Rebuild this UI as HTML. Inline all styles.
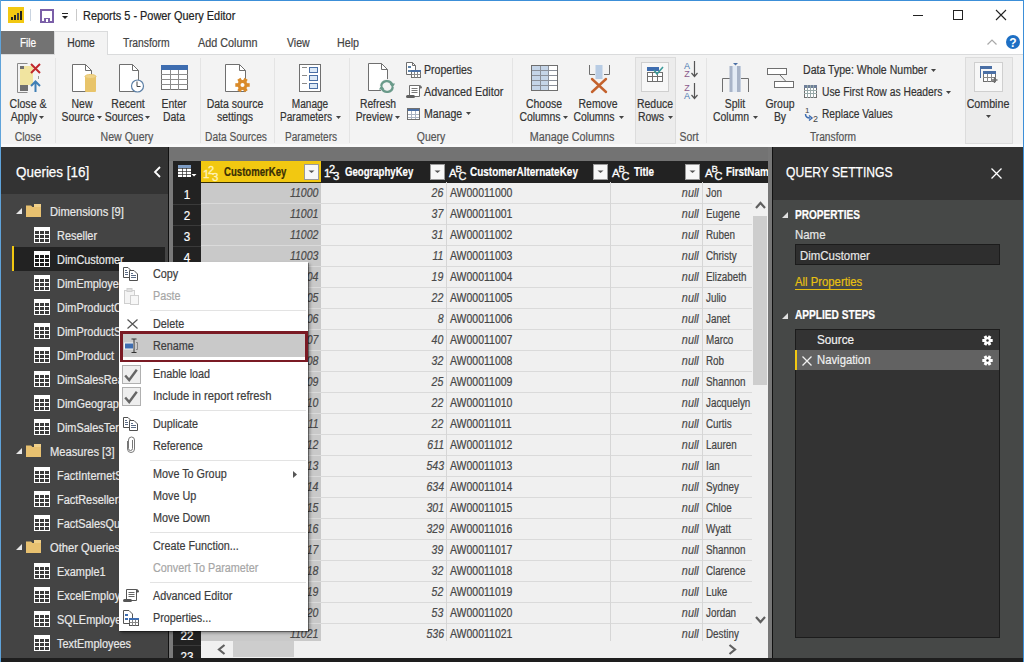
<!DOCTYPE html>
<html><head><meta charset="utf-8"><title>Power Query Editor</title>
<style>
html,body{margin:0;padding:0;}
body{width:1024px;height:662px;overflow:hidden;position:relative;background:#fff;font-family:"Liberation Sans",sans-serif;}
.a{position:absolute;display:block;}
.t{position:absolute;white-space:pre;display:inline-block;-webkit-text-stroke-width:0.2px;}
svg.a{overflow:visible;}
</style></head><body>

<div class="a" style="left:0px;top:0px;width:1024px;height:31px;background:#ffffff;"></div>
<div class="a" style="left:0px;top:31px;width:1024px;height:23px;background:#ffffff;"></div>
<div class="a" style="left:0px;top:54px;width:1024px;height:93px;background:#f3f3f3;"></div>
<div class="a" style="left:0px;top:54px;width:1024px;height:1px;background:#dadbdc;"></div>
<div class="a" style="left:0px;top:147px;width:169px;height:511px;background:#444444;"></div>
<div class="a" style="left:0px;top:147px;width:168px;height:47px;background:#333333;"></div>
<div class="a" style="left:168px;top:147px;width:1px;height:511px;background:#111;"></div>
<div class="a" style="left:169px;top:147px;width:603px;height:511px;background:#737373;"></div>
<div class="a" style="left:169px;top:161px;width:4px;height:497px;background:#7a7a7a;"></div>
<div class="a" style="left:0px;top:144px;width:1024px;height:3px;background:#f9f9f9;"></div>
<div class="a" style="left:772px;top:147px;width:1px;height:511px;background:#111;"></div>
<div class="a" style="left:773px;top:147px;width:251px;height:511px;background:#464847;"></div>
<div class="a" style="left:773px;top:147px;width:251px;height:53px;background:#333333;"></div>
<div class="a" style="left:0px;top:658px;width:1024px;height:4px;background:#1e1e1e;"></div>
<span class="t" style="top:9.84px;font-size:12px;line-height:12px;color:#222;left:83px;transform-origin:0 0;transform:scaleX(0.91);">Reports 5 - Power Query Editor</span>
<div class="a" style="left:1px;top:31px;width:53px;height:23px;background:#737373;"></div>
<span class="t" style="top:36.64px;font-size:12px;line-height:12px;color:#fff;left:27.5px;transform-origin:0 0;transform:scaleX(0.84) translateX(-50%);">File</span>
<div class="a" style="left:54px;top:31px;width:54px;height:24px;background:#f3f3f3;border:1px solid #dadbdc;border-bottom:none;box-sizing:border-box;"></div>
<span class="t" style="top:36.64px;font-size:12px;line-height:12px;color:#333;left:81px;transform-origin:0 0;transform:scaleX(0.86) translateX(-50%);">Home</span>
<span class="t" style="top:36.64px;font-size:12px;line-height:12px;color:#444;left:122.6px;transform-origin:0 0;transform:scaleX(0.86);">Transform</span>
<span class="t" style="top:36.64px;font-size:12px;line-height:12px;color:#444;left:198.4px;transform-origin:0 0;transform:scaleX(0.9);">Add Column</span>
<span class="t" style="top:36.64px;font-size:12px;line-height:12px;color:#444;left:287px;transform-origin:0 0;transform:scaleX(0.88);">View</span>
<span class="t" style="top:36.64px;font-size:12px;line-height:12px;color:#444;left:337px;transform-origin:0 0;transform:scaleX(0.89);">Help</span>
<svg class="a" style="left:8px;top:7px;" width="16" height="16" viewBox="0 0 16 16"><rect x="0" y="0" width="16" height="16" fill="#f2c811"/><rect x="3" y="10" width="2" height="3" fill="#222"/><rect x="6" y="8" width="2" height="5" fill="#222"/><rect x="9" y="6" width="2" height="7" fill="#444"/><rect x="12" y="4" width="2" height="9" fill="#222"/></svg>
<div class="a" style="left:30px;top:9px;width:1px;height:12px;background:#c9d3e0;"></div>
<svg class="a" style="left:40px;top:9px;" width="14" height="14" viewBox="0 0 14 14"><rect x="1" y="1" width="12" height="12" fill="none" stroke="#7b5fa8" stroke-width="2"/><rect x="3.5" y="2" width="7" height="5" fill="#fff"/><rect x="4" y="9" width="6" height="4" fill="#7b5fa8"/><rect x="6" y="10" width="2" height="3" fill="#fff"/></svg>
<svg class="a" style="left:62px;top:13px;" width="6" height="8" viewBox="0 0 6 8"><rect x="0" y="0" width="6" height="1" fill="#222"/><path d="M0 3 L6 3 L3 6 Z" fill="#222"/></svg>
<div class="a" style="left:76px;top:9px;width:1px;height:12px;background:#c9c9c9;"></div>
<div class="a" style="left:913px;top:15px;width:10px;height:1px;background:#222;"></div>
<svg class="a" style="left:953px;top:10px;" width="10" height="10" viewBox="0 0 10 10"><rect x="0.5" y="0.5" width="9" height="9" fill="none" stroke="#222" stroke-width="1"/></svg>
<svg class="a" style="left:996px;top:10px;" width="10" height="10" viewBox="0 0 10 10"><path d="M0 0 L10 10 M10 0 L0 10" stroke="#222" stroke-width="1.1"/></svg>
<svg class="a" style="left:987px;top:39px;" width="10" height="6" viewBox="0 0 10 6"><path d="M0.5 5.5 L5 1 L9.5 5.5" fill="none" stroke="#a8a8a8" stroke-width="1.2"/></svg>
<svg class="a" style="left:1006px;top:35px;" width="14" height="14" viewBox="0 0 14 14"><circle cx="7" cy="7" r="7" fill="#1e6fc4"/><text x="7" y="11.5" text-anchor="middle" font-family="Liberation Sans" font-weight="bold" font-size="12" fill="#fff">?</text></svg>
<span class="t" style="top:97.84px;font-size:12px;line-height:12px;color:#333;left:27.5px;transform-origin:0 0;transform:scaleX(0.88) translateX(-50%);">Close &amp;</span>
<span class="t" style="top:110.84px;font-size:12px;line-height:12px;color:#333;left:23.5px;transform-origin:0 0;transform:scaleX(0.88) translateX(-50%);">Apply</span>
<svg class="a" style="left:39px;top:116px;" width="5" height="3" viewBox="0 0 5 3"><path d="M0 0 L5 0 L2.5 3 Z" fill="#444"/></svg>
<span class="t" style="top:130.84px;font-size:12px;line-height:12px;color:#555;left:27.5px;transform-origin:0 0;transform:scaleX(0.87) translateX(-50%);">Close</span>
<div class="a" style="left:55px;top:58px;width:1px;height:85px;background:#e4e4e4;"></div>
<span class="t" style="top:97.84px;font-size:12px;line-height:12px;color:#333;left:82px;transform-origin:0 0;transform:scaleX(0.87) translateX(-50%);">New</span>
<span class="t" style="top:110.84px;font-size:12px;line-height:12px;color:#333;left:78px;transform-origin:0 0;transform:scaleX(0.87) translateX(-50%);">Source</span>
<svg class="a" style="left:97px;top:116px;" width="5" height="3" viewBox="0 0 5 3"><path d="M0 0 L5 0 L2.5 3 Z" fill="#444"/></svg>
<span class="t" style="top:97.84px;font-size:12px;line-height:12px;color:#333;left:128px;transform-origin:0 0;transform:scaleX(0.88) translateX(-50%);">Recent</span>
<span class="t" style="top:110.84px;font-size:12px;line-height:12px;color:#333;left:124px;transform-origin:0 0;transform:scaleX(0.88) translateX(-50%);">Sources</span>
<svg class="a" style="left:145px;top:116px;" width="5" height="3" viewBox="0 0 5 3"><path d="M0 0 L5 0 L2.5 3 Z" fill="#444"/></svg>
<span class="t" style="top:97.84px;font-size:12px;line-height:12px;color:#333;left:174px;transform-origin:0 0;transform:scaleX(0.87) translateX(-50%);">Enter</span>
<span class="t" style="top:110.84px;font-size:12px;line-height:12px;color:#333;left:174px;transform-origin:0 0;transform:scaleX(0.87) translateX(-50%);">Data</span>
<span class="t" style="top:130.84px;font-size:12px;line-height:12px;color:#555;left:126.7px;transform-origin:0 0;transform:scaleX(0.88) translateX(-50%);">New Query</span>
<div class="a" style="left:200px;top:58px;width:1px;height:85px;background:#e4e4e4;"></div>
<span class="t" style="top:97.84px;font-size:12px;line-height:12px;color:#333;left:235.3px;transform-origin:0 0;transform:scaleX(0.875) translateX(-50%);">Data source</span>
<span class="t" style="top:110.84px;font-size:12px;line-height:12px;color:#333;left:235.3px;transform-origin:0 0;transform:scaleX(0.875) translateX(-50%);">settings</span>
<span class="t" style="top:130.84px;font-size:12px;line-height:12px;color:#555;left:236.4px;transform-origin:0 0;transform:scaleX(0.85) translateX(-50%);">Data Sources</span>
<div class="a" style="left:274px;top:58px;width:1px;height:85px;background:#e4e4e4;"></div>
<span class="t" style="top:97.84px;font-size:12px;line-height:12px;color:#333;left:310px;transform-origin:0 0;transform:scaleX(0.84) translateX(-50%);">Manage</span>
<span class="t" style="top:110.84px;font-size:12px;line-height:12px;color:#333;left:306px;transform-origin:0 0;transform:scaleX(0.84) translateX(-50%);">Parameters</span>
<svg class="a" style="left:336px;top:116px;" width="5" height="3" viewBox="0 0 5 3"><path d="M0 0 L5 0 L2.5 3 Z" fill="#444"/></svg>
<span class="t" style="top:130.84px;font-size:12px;line-height:12px;color:#555;left:310.5px;transform-origin:0 0;transform:scaleX(0.84) translateX(-50%);">Parameters</span>
<div class="a" style="left:349px;top:58px;width:1px;height:85px;background:#e4e4e4;"></div>
<span class="t" style="top:97.84px;font-size:12px;line-height:12px;color:#333;left:378px;transform-origin:0 0;transform:scaleX(0.86) translateX(-50%);">Refresh</span>
<span class="t" style="top:110.84px;font-size:12px;line-height:12px;color:#333;left:374px;transform-origin:0 0;transform:scaleX(0.86) translateX(-50%);">Preview</span>
<svg class="a" style="left:395px;top:116px;" width="5" height="3" viewBox="0 0 5 3"><path d="M0 0 L5 0 L2.5 3 Z" fill="#444"/></svg>
<span class="t" style="top:64.14px;font-size:12px;line-height:12px;color:#333;left:424px;transform-origin:0 0;transform:scaleX(0.88);">Properties</span>
<span class="t" style="top:85.64px;font-size:12px;line-height:12px;color:#333;left:424px;transform-origin:0 0;transform:scaleX(0.9);">Advanced Editor</span>
<span class="t" style="top:107.64px;font-size:12px;line-height:12px;color:#333;left:424px;transform-origin:0 0;transform:scaleX(0.88);">Manage</span>
<svg class="a" style="left:466px;top:112px;" width="5" height="3" viewBox="0 0 5 3"><path d="M0 0 L5 0 L2.5 3 Z" fill="#444"/></svg>
<span class="t" style="top:130.84px;font-size:12px;line-height:12px;color:#555;left:430.5px;transform-origin:0 0;transform:scaleX(0.87) translateX(-50%);">Query</span>
<div class="a" style="left:512px;top:58px;width:1px;height:85px;background:#e4e4e4;"></div>
<span class="t" style="top:97.84px;font-size:12px;line-height:12px;color:#333;left:544px;transform-origin:0 0;transform:scaleX(0.87) translateX(-50%);">Choose</span>
<span class="t" style="top:110.84px;font-size:12px;line-height:12px;color:#333;left:540px;transform-origin:0 0;transform:scaleX(0.87) translateX(-50%);">Columns</span>
<svg class="a" style="left:563px;top:116px;" width="5" height="3" viewBox="0 0 5 3"><path d="M0 0 L5 0 L2.5 3 Z" fill="#444"/></svg>
<span class="t" style="top:97.84px;font-size:12px;line-height:12px;color:#333;left:598px;transform-origin:0 0;transform:scaleX(0.87) translateX(-50%);">Remove</span>
<span class="t" style="top:110.84px;font-size:12px;line-height:12px;color:#333;left:594px;transform-origin:0 0;transform:scaleX(0.87) translateX(-50%);">Columns</span>
<svg class="a" style="left:619px;top:116px;" width="5" height="3" viewBox="0 0 5 3"><path d="M0 0 L5 0 L2.5 3 Z" fill="#444"/></svg>
<span class="t" style="top:130.84px;font-size:12px;line-height:12px;color:#555;left:572px;transform-origin:0 0;transform:scaleX(0.9) translateX(-50%);">Manage Columns</span>
<div class="a" style="left:635px;top:57px;width:41px;height:87px;background:#ececec;border:1px solid #dcdcdc;box-sizing:border-box;"></div>
<div class="a" style="left:641px;top:62px;width:28px;height:30px;background:#f7f7f7;border:1px solid #cfcfcf;box-sizing:border-box;"></div>
<span class="t" style="top:97.84px;font-size:12px;line-height:12px;color:#333;left:655px;transform-origin:0 0;transform:scaleX(0.87) translateX(-50%);">Reduce</span>
<span class="t" style="top:110.84px;font-size:12px;line-height:12px;color:#333;left:651px;transform-origin:0 0;transform:scaleX(0.87) translateX(-50%);">Rows</span>
<svg class="a" style="left:668px;top:116px;" width="5" height="3" viewBox="0 0 5 3"><path d="M0 0 L5 0 L2.5 3 Z" fill="#444"/></svg>
<span class="t" style="top:130.84px;font-size:12px;line-height:12px;color:#555;left:689px;transform-origin:0 0;transform:scaleX(0.87) translateX(-50%);">Sort</span>
<div class="a" style="left:706px;top:58px;width:1px;height:85px;background:#e4e4e4;"></div>
<span class="t" style="top:97.84px;font-size:12px;line-height:12px;color:#333;left:735px;transform-origin:0 0;transform:scaleX(0.87) translateX(-50%);">Split</span>
<span class="t" style="top:110.84px;font-size:12px;line-height:12px;color:#333;left:731px;transform-origin:0 0;transform:scaleX(0.87) translateX(-50%);">Column</span>
<svg class="a" style="left:753px;top:116px;" width="5" height="3" viewBox="0 0 5 3"><path d="M0 0 L5 0 L2.5 3 Z" fill="#444"/></svg>
<span class="t" style="top:97.84px;font-size:12px;line-height:12px;color:#333;left:780px;transform-origin:0 0;transform:scaleX(0.87) translateX(-50%);">Group</span>
<span class="t" style="top:110.84px;font-size:12px;line-height:12px;color:#333;left:780px;transform-origin:0 0;transform:scaleX(0.87) translateX(-50%);">By</span>
<span class="t" style="top:64.34px;font-size:12px;line-height:12px;color:#333;left:803.4px;transform-origin:0 0;transform:scaleX(0.88);">Data Type: Whole Number</span>
<svg class="a" style="left:931px;top:69px;" width="5" height="3" viewBox="0 0 5 3"><path d="M0 0 L5 0 L2.5 3 Z" fill="#444"/></svg>
<span class="t" style="top:85.84px;font-size:12px;line-height:12px;color:#333;left:821.6px;transform-origin:0 0;transform:scaleX(0.86);">Use First Row as Headers</span>
<svg class="a" style="left:946px;top:91px;" width="5" height="3" viewBox="0 0 5 3"><path d="M0 0 L5 0 L2.5 3 Z" fill="#444"/></svg>
<span class="t" style="top:107.84px;font-size:12px;line-height:12px;color:#333;left:821.6px;transform-origin:0 0;transform:scaleX(0.85);">Replace Values</span>
<span class="t" style="top:130.84px;font-size:12px;line-height:12px;color:#555;left:833px;transform-origin:0 0;transform:scaleX(0.85) translateX(-50%);">Transform</span>
<div class="a" style="left:965px;top:57px;width:48px;height:87px;background:#ececec;border:1px solid #dcdcdc;box-sizing:border-box;"></div>
<div class="a" style="left:974px;top:62px;width:29px;height:30px;background:#f7f7f7;border:1px solid #cfcfcf;box-sizing:border-box;"></div>
<span class="t" style="top:97.84px;font-size:12px;line-height:12px;color:#333;left:988px;transform-origin:0 0;transform:scaleX(0.89) translateX(-50%);">Combine</span>
<svg class="a" style="left:985.5px;top:115px;" width="5" height="3" viewBox="0 0 5 3"><path d="M0 0 L5 0 L2.5 3 Z" fill="#444"/></svg>
<svg class="a" style="left:17px;top:63px;" width="25" height="30" viewBox="0 0 25 30"><path d="M10.5 0.5 H0.5 V29.5 H10.5" fill="none" stroke="#8a8a8a" stroke-width="1"/><rect x="3" y="3" width="13" height="19" fill="#f1e4a0"/><rect x="3" y="3" width="4" height="3" fill="#707070"/><rect x="3" y="22" width="8" height="6" fill="#707070"/><path d="M14 1 L23 10 M23 1 L14 10" stroke="#c0282d" stroke-width="2"/><path d="M18.5 29 V19 M14 23 L18.5 18.5 L23 23" fill="none" stroke="#3f7fb5" stroke-width="2"/><rect x="21" y="13" width="1" height="3" fill="#999"/></svg>
<svg class="a" style="left:72px;top:64px;" width="26" height="30" viewBox="0 0 26 30"><path d="M0.5 0.5 H13.5 L19.5 6.5 V27.5 H0.5 Z" fill="#fff" stroke="#6f6f6f" stroke-width="1"/><path d="M13.5 0.5 V6.5 H19.5" fill="none" stroke="#6f6f6f" stroke-width="1"/><rect x="13" y="12" width="11" height="16" rx="1" fill="#e8c46a"/><ellipse cx="18.5" cy="12.5" rx="5.5" ry="2" fill="#f0d48a" stroke="#e8c46a"/></svg>
<svg class="a" style="left:119px;top:64px;" width="27" height="30" viewBox="0 0 27 30"><path d="M0.5 0.5 H13.5 L19.5 6.5 V27.5 H0.5 Z" fill="#fff" stroke="#6f6f6f" stroke-width="1"/><path d="M13.5 0.5 V6.5 H19.5" fill="none" stroke="#6f6f6f" stroke-width="1"/><circle cx="18.5" cy="22" r="6" fill="#fff" stroke="#5b7fa6" stroke-width="1.2"/><path d="M18 17.5 V22.5 H21.5" fill="none" stroke="#444" stroke-width="1"/></svg>
<svg class="a" style="left:161px;top:65px;" width="27" height="25" viewBox="0 0 27 25"><rect x="0.5" y="0.5" width="26" height="24" fill="#fff" stroke="#6f6f6f"/><rect x="0" y="0" width="27" height="5" fill="#3e6db0"/><path d="M9.5 5 V25 M17.5 5 V25 M0 9.5 H27 M0 14.5 H27 M0 19.5 H27" stroke="#8c8c8c" stroke-width="1"/></svg>
<svg class="a" style="left:225px;top:64px;" width="26" height="30" viewBox="0 0 26 30"><path d="M0.5 0.5 H14.5 L20.5 6.5 V27.5 H0.5 Z" fill="#fff" stroke="#6f6f6f" stroke-width="1"/><path d="M14.5 0.5 V6.5 H20.5" fill="none" stroke="#6f6f6f" stroke-width="1"/><g transform="translate(17.5 21)" fill="#d98b2b"><circle r="5"/><rect x="-1.8" y="-7.2" width="3.6" height="14.4" transform="rotate(30)"/><rect x="-1.8" y="-7.2" width="3.6" height="14.4" transform="rotate(90)"/><rect x="-1.8" y="-7.2" width="3.6" height="14.4" transform="rotate(150)"/><circle r="2" fill="#fff"/></g></svg>
<svg class="a" style="left:299px;top:64px;" width="23" height="28" viewBox="0 0 23 28"><rect x="0.5" y="0.5" width="21" height="27" fill="#fff" stroke="#6f6f6f"/><path d="M3 3.5 H8 M3 11.5 H8 M3 19.5 H8" stroke="#8a8a8a"/><rect x="10.5" y="3.5" width="8" height="5" fill="#dce9f7" stroke="#4a6fa5"/><rect x="10.5" y="11.5" width="8" height="5" fill="#dce9f7" stroke="#4a6fa5"/><rect x="10.5" y="19.5" width="8" height="5" fill="#dce9f7" stroke="#4a6fa5"/></svg>
<svg class="a" style="left:368px;top:63px;" width="28" height="30" viewBox="0 0 28 30"><path d="M0.5 0.5 H13.5 L19.5 6.5 V27.5 H0.5 Z" fill="#fff" stroke="#6f6f6f" stroke-width="1"/><path d="M13.5 0.5 V6.5 H19.5" fill="none" stroke="#6f6f6f" stroke-width="1"/><circle cx="19" cy="23.5" r="7.5" fill="#f3f3f3"/><g fill="none" stroke="#6a9a8a" stroke-width="2.3"><path d="M13.2 23 A5.8 5.8 0 0 1 24.2 21.5"/><path d="M24.8 24 A5.8 5.8 0 0 1 13.8 25.5"/></g><path d="M21.5 20.5 L27 20.5 L24.5 25 Z" fill="#6a9a8a"/><path d="M11 26.5 L16.5 26.5 L13.5 22 Z" fill="#6a9a8a"/></svg>
<svg class="a" style="left:406px;top:62px;" width="16" height="16" viewBox="0 0 16 16"><path d="M0.5 0.5 H6.5 L9.5 3.5 V12.5 H0.5 Z" fill="#fff" stroke="#6f6f6f" stroke-width="1"/><path d="M6.5 0.5 V3.5 H9.5" fill="none" stroke="#6f6f6f" stroke-width="1"/><rect x="2" y="4" width="3" height="2" fill="#5b7fa6"/><rect x="2" y="8" width="3" height="2" fill="#5b7fa6"/><rect x="5.5" y="8.5" width="9" height="7" fill="#fff" stroke="#6f6f6f"/><rect x="5" y="8" width="10" height="2" fill="#4a6fa5"/><path d="M8.5 10 V15.5 M11.5 10 V15.5 M5.5 12.5 H14.5" stroke="#8a8a8a"/></svg>
<svg class="a" style="left:406px;top:85px;" width="16" height="14" viewBox="0 0 16 14"><path d="M3.5 0.5 H13.5 V11.5 H3.5 Z" fill="#fff" stroke="#6f6f6f"/><path d="M13.5 0.5 Q15.5 0.5 15.5 3 H13.5" fill="#6f6f6f" stroke="#6f6f6f"/><path d="M5.5 3.5 H11.5 M5.5 5.5 H11.5 M5.5 7.5 H11.5" stroke="#7a7a7a"/><rect x="0" y="10" width="9" height="3" rx="1.5" fill="#5f5f5f"/></svg>
<svg class="a" style="left:407px;top:108px;" width="13" height="12" viewBox="0 0 13 12"><rect x="0.5" y="0.5" width="12" height="11" fill="#fff" stroke="#6f6f6f"/><rect x="0" y="0" width="13" height="3" fill="#4a6fa5"/><path d="M4.5 3 V12 M8.5 3 V12 M0 6.5 H13 M0 9.5 H13" stroke="#a9b3c2"/><rect x="0.5" y="0.5" width="12" height="11" fill="none" stroke="#6f6f6f"/></svg>
<svg class="a" style="left:531px;top:65px;" width="27" height="26" viewBox="0 0 27 26"><rect x="0.5" y="0.5" width="26" height="25" fill="#fff" stroke="#6f6f6f"/><rect x="1" y="1" width="17" height="24" fill="#c5d5e8"/><path d="M9.5 0 V26 M17.5 0 V26 M0 5.5 H27 M0 10.5 H27 M0 15.5 H27 M0 20.5 H27" stroke="#8a8f99" stroke-width="1"/><rect x="0.5" y="0.5" width="26" height="25" fill="none" stroke="#6f6f6f"/></svg>
<svg class="a" style="left:589px;top:65px;" width="22" height="29" viewBox="0 0 22 29"><path d="M0.5 0 V9.5 H6 M15 9.5 H20.5 V0" fill="none" stroke="#6f6f6f"/><rect x="6.5" y="0" width="7" height="14" fill="#b8cce4"/><path d="M3 14 L17 27 M17 14 L3 27" stroke="#c4622d" stroke-width="2.4" stroke-linecap="round"/></svg>
<svg class="a" style="left:647px;top:67px;" width="16" height="15" viewBox="0 0 16 15"><rect x="0" y="0" width="12" height="4" fill="#3e6db0"/><rect x="0.5" y="5.5" width="15" height="9" fill="#fff" stroke="#6f6f6f"/><path d="M5.5 5 V15 M10.5 5 V15 M0 9.5 H16" stroke="#6f6f6f"/><path d="M7 3 L10 7 L16 0" fill="none" stroke="#3c9a9a" stroke-width="1.6"/></svg>
<svg class="a" style="left:683px;top:61px;" width="16" height="17" viewBox="0 0 16 17"><text x="4" y="7.5" text-anchor="middle" font-family="Liberation Sans" font-size="9" fill="#4a78b0">A</text><text x="4" y="15.5" text-anchor="middle" font-family="Liberation Sans" font-size="9" fill="#8b5a8b">Z</text><path d="M11.5 0 V15 M8.5 12 L11.5 15.5 L14.5 12" fill="none" stroke="#555" stroke-width="1.2"/></svg>
<svg class="a" style="left:683px;top:83px;" width="16" height="17" viewBox="0 0 16 17"><text x="4" y="7.5" text-anchor="middle" font-family="Liberation Sans" font-size="9" fill="#8b5a8b">Z</text><text x="4" y="15.5" text-anchor="middle" font-family="Liberation Sans" font-size="9" fill="#4a78b0">A</text><path d="M11.5 0 V15 M8.5 12 L11.5 15.5 L14.5 12" fill="none" stroke="#555" stroke-width="1.2"/></svg>
<svg class="a" style="left:722px;top:63px;" width="28" height="30" viewBox="0 0 28 30"><path d="M0.5 29 V15.5 H8 M19 15.5 H26.5 V29" fill="none" stroke="#6f6f6f"/><rect x="8" y="3" width="11" height="26" fill="#e3ebf5"/><rect x="7.5" y="3" width="3" height="26" fill="#a8b4c8"/><rect x="15" y="3" width="3.5" height="26" fill="#a8b4c8"/><path d="M11 0 L16 0 L13.5 2.5 Z" fill="#4a6fa5"/></svg>
<svg class="a" style="left:767px;top:68px;" width="27" height="20" viewBox="0 0 27 20"><rect x="0.5" y="0.5" width="19" height="6" fill="#fff" stroke="#6f6f6f"/><rect x="7.5" y="13.5" width="19" height="6" fill="#fff" stroke="#6f6f6f"/><path d="M13 7 L19 13.5" stroke="#6f6f6f"/></svg>
<svg class="a" style="left:804px;top:85px;" width="13" height="13" viewBox="0 0 13 13"><rect x="0.5" y="0.5" width="12" height="12" fill="#fff" stroke="#6f6f6f"/><rect x="0" y="0" width="13" height="3" fill="#6f7f99"/><path d="M3.5 0 V13 M6.5 0 V13 M9.5 0 V13 M0 5.5 H13 M0 8.5 H13" stroke="#9aa" stroke-width="1"/></svg>
<svg class="a" style="left:804px;top:106px;" width="16" height="17" viewBox="0 0 16 17"><text x="1" y="7" font-family="Liberation Sans" font-size="8" fill="#444">1</text><text x="9" y="16" font-family="Liberation Sans" font-size="9" fill="#444">2</text><path d="M1.5 8 Q1.5 12 6 12" fill="none" stroke="#3e6db0" stroke-width="1.5"/><path d="M5 9.5 L8 12 L5 14.5" fill="none" stroke="#3e6db0" stroke-width="1.5"/></svg>
<svg class="a" style="left:980px;top:66px;" width="18" height="18" viewBox="0 0 18 18"><rect x="0" y="0" width="12" height="3" fill="#4a6fa5"/><path d="M0.5 3 V12" stroke="#4a6fa5"/><rect x="3.5" y="5.5" width="12" height="10" fill="#fff" stroke="#6f6f6f"/><rect x="3" y="5" width="13" height="3" fill="#4a6fa5"/><path d="M7.5 8 V16 M11.5 8 V16 M3 11.5 H16" stroke="#8a8a8a"/><path d="M14.5 11 V17 M11.5 14 H17.5" stroke="#6f6f6f" stroke-width="1.4"/></svg>
<div class="a" style="left:0px;top:147px;width:168px;height:511px;overflow:hidden;"><div class="a" style="left:0px;top:-147px;width:1024px;height:662px;">
<span class="t" style="top:165.15px;font-size:14px;line-height:14px;color:#fff;left:15.7px;transform-origin:0 0;transform:scaleX(0.96);-webkit-text-stroke:0.25px #fff;">Queries [16]</span>
<svg class="a" style="left:153px;top:166px;" width="8" height="12" viewBox="0 0 8 12"><path d="M7 1 L2 6 L7 11" fill="none" stroke="#fff" stroke-width="1.8"/></svg>
<svg class="a" style="left:16px;top:208px;" width="7" height="6" viewBox="0 0 7 6"><path d="M0 6 L6 6 L6 0 Z" fill="#e6e6e6"/></svg>
<svg class="a" style="left:26px;top:204px;" width="15" height="13" viewBox="0 0 15 13"><path d="M0 1.5 H5 L6.5 3 H15 V13 H0 Z" fill="#e8c170"/><rect x="8" y="0" width="7" height="3" fill="#f0d08a"/></svg>
<span class="t" style="top:205.84px;font-size:12px;line-height:12px;color:#e8e8e8;left:49.5px;transform-origin:0 0;transform:scaleX(0.93);">Dimensions [9]</span>
<svg class="a" style="left:34px;top:227px;" width="16" height="16" viewBox="0 0 16 16"><rect x="0" y="0" width="16" height="16" fill="#fff"/><rect x="1" y="4" width="4" height="3" fill="#3a3a3a"/><rect x="1" y="8" width="4" height="3" fill="#3a3a3a"/><rect x="1" y="12" width="4" height="3" fill="#3a3a3a"/><rect x="6" y="4" width="4" height="3" fill="#3a3a3a"/><rect x="6" y="8" width="4" height="3" fill="#3a3a3a"/><rect x="6" y="12" width="4" height="3" fill="#3a3a3a"/><rect x="11" y="4" width="4" height="3" fill="#3a3a3a"/><rect x="11" y="8" width="4" height="3" fill="#3a3a3a"/><rect x="11" y="12" width="4" height="3" fill="#3a3a3a"/></svg>
<span class="t" style="top:229.84px;font-size:12px;line-height:12px;color:#e8e8e8;left:56.5px;transform-origin:0 0;transform:scaleX(0.91);">Reseller</span>
<div class="a" style="left:12px;top:247px;width:153px;height:24px;background:#222222;"></div>
<div class="a" style="left:12px;top:246px;width:2px;height:25px;background:#f2c811;"></div>
<svg class="a" style="left:34px;top:251px;" width="16" height="16" viewBox="0 0 16 16"><rect x="0" y="0" width="16" height="16" fill="#fff"/><rect x="1" y="4" width="4" height="3" fill="#1a1a1a"/><rect x="1" y="8" width="4" height="3" fill="#1a1a1a"/><rect x="1" y="12" width="4" height="3" fill="#1a1a1a"/><rect x="6" y="4" width="4" height="3" fill="#1a1a1a"/><rect x="6" y="8" width="4" height="3" fill="#1a1a1a"/><rect x="6" y="12" width="4" height="3" fill="#1a1a1a"/><rect x="11" y="4" width="4" height="3" fill="#1a1a1a"/><rect x="11" y="8" width="4" height="3" fill="#1a1a1a"/><rect x="11" y="12" width="4" height="3" fill="#1a1a1a"/></svg>
<span class="t" style="top:253.84px;font-size:12px;line-height:12px;color:#e8e8e8;left:56.5px;transform-origin:0 0;transform:scaleX(0.91);">DimCustomer</span>
<svg class="a" style="left:34px;top:275px;" width="16" height="16" viewBox="0 0 16 16"><rect x="0" y="0" width="16" height="16" fill="#fff"/><rect x="1" y="4" width="4" height="3" fill="#3a3a3a"/><rect x="1" y="8" width="4" height="3" fill="#3a3a3a"/><rect x="1" y="12" width="4" height="3" fill="#3a3a3a"/><rect x="6" y="4" width="4" height="3" fill="#3a3a3a"/><rect x="6" y="8" width="4" height="3" fill="#3a3a3a"/><rect x="6" y="12" width="4" height="3" fill="#3a3a3a"/><rect x="11" y="4" width="4" height="3" fill="#3a3a3a"/><rect x="11" y="8" width="4" height="3" fill="#3a3a3a"/><rect x="11" y="12" width="4" height="3" fill="#3a3a3a"/></svg>
<span class="t" style="top:277.84px;font-size:12px;line-height:12px;color:#e8e8e8;left:56.5px;transform-origin:0 0;transform:scaleX(0.91);">DimEmployee</span>
<svg class="a" style="left:34px;top:299px;" width="16" height="16" viewBox="0 0 16 16"><rect x="0" y="0" width="16" height="16" fill="#fff"/><rect x="1" y="4" width="4" height="3" fill="#3a3a3a"/><rect x="1" y="8" width="4" height="3" fill="#3a3a3a"/><rect x="1" y="12" width="4" height="3" fill="#3a3a3a"/><rect x="6" y="4" width="4" height="3" fill="#3a3a3a"/><rect x="6" y="8" width="4" height="3" fill="#3a3a3a"/><rect x="6" y="12" width="4" height="3" fill="#3a3a3a"/><rect x="11" y="4" width="4" height="3" fill="#3a3a3a"/><rect x="11" y="8" width="4" height="3" fill="#3a3a3a"/><rect x="11" y="12" width="4" height="3" fill="#3a3a3a"/></svg>
<span class="t" style="top:301.84px;font-size:12px;line-height:12px;color:#e8e8e8;left:56.5px;transform-origin:0 0;transform:scaleX(0.91);">DimProductCategory</span>
<svg class="a" style="left:34px;top:323px;" width="16" height="16" viewBox="0 0 16 16"><rect x="0" y="0" width="16" height="16" fill="#fff"/><rect x="1" y="4" width="4" height="3" fill="#3a3a3a"/><rect x="1" y="8" width="4" height="3" fill="#3a3a3a"/><rect x="1" y="12" width="4" height="3" fill="#3a3a3a"/><rect x="6" y="4" width="4" height="3" fill="#3a3a3a"/><rect x="6" y="8" width="4" height="3" fill="#3a3a3a"/><rect x="6" y="12" width="4" height="3" fill="#3a3a3a"/><rect x="11" y="4" width="4" height="3" fill="#3a3a3a"/><rect x="11" y="8" width="4" height="3" fill="#3a3a3a"/><rect x="11" y="12" width="4" height="3" fill="#3a3a3a"/></svg>
<span class="t" style="top:325.84px;font-size:12px;line-height:12px;color:#e8e8e8;left:56.5px;transform-origin:0 0;transform:scaleX(0.91);">DimProductSubcategory</span>
<svg class="a" style="left:34px;top:347px;" width="16" height="16" viewBox="0 0 16 16"><rect x="0" y="0" width="16" height="16" fill="#fff"/><rect x="1" y="4" width="4" height="3" fill="#3a3a3a"/><rect x="1" y="8" width="4" height="3" fill="#3a3a3a"/><rect x="1" y="12" width="4" height="3" fill="#3a3a3a"/><rect x="6" y="4" width="4" height="3" fill="#3a3a3a"/><rect x="6" y="8" width="4" height="3" fill="#3a3a3a"/><rect x="6" y="12" width="4" height="3" fill="#3a3a3a"/><rect x="11" y="4" width="4" height="3" fill="#3a3a3a"/><rect x="11" y="8" width="4" height="3" fill="#3a3a3a"/><rect x="11" y="12" width="4" height="3" fill="#3a3a3a"/></svg>
<span class="t" style="top:349.84px;font-size:12px;line-height:12px;color:#e8e8e8;left:56.5px;transform-origin:0 0;transform:scaleX(0.91);">DimProduct</span>
<svg class="a" style="left:34px;top:371px;" width="16" height="16" viewBox="0 0 16 16"><rect x="0" y="0" width="16" height="16" fill="#fff"/><rect x="1" y="4" width="4" height="3" fill="#3a3a3a"/><rect x="1" y="8" width="4" height="3" fill="#3a3a3a"/><rect x="1" y="12" width="4" height="3" fill="#3a3a3a"/><rect x="6" y="4" width="4" height="3" fill="#3a3a3a"/><rect x="6" y="8" width="4" height="3" fill="#3a3a3a"/><rect x="6" y="12" width="4" height="3" fill="#3a3a3a"/><rect x="11" y="4" width="4" height="3" fill="#3a3a3a"/><rect x="11" y="8" width="4" height="3" fill="#3a3a3a"/><rect x="11" y="12" width="4" height="3" fill="#3a3a3a"/></svg>
<span class="t" style="top:373.84px;font-size:12px;line-height:12px;color:#e8e8e8;left:56.5px;transform-origin:0 0;transform:scaleX(0.91);">DimSalesReason</span>
<svg class="a" style="left:34px;top:395px;" width="16" height="16" viewBox="0 0 16 16"><rect x="0" y="0" width="16" height="16" fill="#fff"/><rect x="1" y="4" width="4" height="3" fill="#3a3a3a"/><rect x="1" y="8" width="4" height="3" fill="#3a3a3a"/><rect x="1" y="12" width="4" height="3" fill="#3a3a3a"/><rect x="6" y="4" width="4" height="3" fill="#3a3a3a"/><rect x="6" y="8" width="4" height="3" fill="#3a3a3a"/><rect x="6" y="12" width="4" height="3" fill="#3a3a3a"/><rect x="11" y="4" width="4" height="3" fill="#3a3a3a"/><rect x="11" y="8" width="4" height="3" fill="#3a3a3a"/><rect x="11" y="12" width="4" height="3" fill="#3a3a3a"/></svg>
<span class="t" style="top:397.84px;font-size:12px;line-height:12px;color:#e8e8e8;left:56.5px;transform-origin:0 0;transform:scaleX(0.91);">DimGeography</span>
<svg class="a" style="left:34px;top:419px;" width="16" height="16" viewBox="0 0 16 16"><rect x="0" y="0" width="16" height="16" fill="#fff"/><rect x="1" y="4" width="4" height="3" fill="#3a3a3a"/><rect x="1" y="8" width="4" height="3" fill="#3a3a3a"/><rect x="1" y="12" width="4" height="3" fill="#3a3a3a"/><rect x="6" y="4" width="4" height="3" fill="#3a3a3a"/><rect x="6" y="8" width="4" height="3" fill="#3a3a3a"/><rect x="6" y="12" width="4" height="3" fill="#3a3a3a"/><rect x="11" y="4" width="4" height="3" fill="#3a3a3a"/><rect x="11" y="8" width="4" height="3" fill="#3a3a3a"/><rect x="11" y="12" width="4" height="3" fill="#3a3a3a"/></svg>
<span class="t" style="top:421.84px;font-size:12px;line-height:12px;color:#e8e8e8;left:56.5px;transform-origin:0 0;transform:scaleX(0.91);">DimSalesTerritory</span>
<svg class="a" style="left:16px;top:448px;" width="7" height="6" viewBox="0 0 7 6"><path d="M0 6 L6 6 L6 0 Z" fill="#e6e6e6"/></svg>
<svg class="a" style="left:26px;top:444px;" width="15" height="13" viewBox="0 0 15 13"><path d="M0 1.5 H5 L6.5 3 H15 V13 H0 Z" fill="#e8c170"/><rect x="8" y="0" width="7" height="3" fill="#f0d08a"/></svg>
<span class="t" style="top:445.84px;font-size:12px;line-height:12px;color:#e8e8e8;left:49.5px;transform-origin:0 0;transform:scaleX(0.93);">Measures [3]</span>
<svg class="a" style="left:34px;top:467px;" width="16" height="16" viewBox="0 0 16 16"><rect x="0" y="0" width="16" height="16" fill="#fff"/><rect x="1" y="4" width="4" height="3" fill="#3a3a3a"/><rect x="1" y="8" width="4" height="3" fill="#3a3a3a"/><rect x="1" y="12" width="4" height="3" fill="#3a3a3a"/><rect x="6" y="4" width="4" height="3" fill="#3a3a3a"/><rect x="6" y="8" width="4" height="3" fill="#3a3a3a"/><rect x="6" y="12" width="4" height="3" fill="#3a3a3a"/><rect x="11" y="4" width="4" height="3" fill="#3a3a3a"/><rect x="11" y="8" width="4" height="3" fill="#3a3a3a"/><rect x="11" y="12" width="4" height="3" fill="#3a3a3a"/></svg>
<span class="t" style="top:469.84px;font-size:12px;line-height:12px;color:#e8e8e8;left:56.5px;transform-origin:0 0;transform:scaleX(0.91);">FactInternetSales</span>
<svg class="a" style="left:34px;top:491px;" width="16" height="16" viewBox="0 0 16 16"><rect x="0" y="0" width="16" height="16" fill="#fff"/><rect x="1" y="4" width="4" height="3" fill="#3a3a3a"/><rect x="1" y="8" width="4" height="3" fill="#3a3a3a"/><rect x="1" y="12" width="4" height="3" fill="#3a3a3a"/><rect x="6" y="4" width="4" height="3" fill="#3a3a3a"/><rect x="6" y="8" width="4" height="3" fill="#3a3a3a"/><rect x="6" y="12" width="4" height="3" fill="#3a3a3a"/><rect x="11" y="4" width="4" height="3" fill="#3a3a3a"/><rect x="11" y="8" width="4" height="3" fill="#3a3a3a"/><rect x="11" y="12" width="4" height="3" fill="#3a3a3a"/></svg>
<span class="t" style="top:493.84px;font-size:12px;line-height:12px;color:#e8e8e8;left:56.5px;transform-origin:0 0;transform:scaleX(0.91);">FactResellerSales</span>
<svg class="a" style="left:34px;top:515px;" width="16" height="16" viewBox="0 0 16 16"><rect x="0" y="0" width="16" height="16" fill="#fff"/><rect x="1" y="4" width="4" height="3" fill="#3a3a3a"/><rect x="1" y="8" width="4" height="3" fill="#3a3a3a"/><rect x="1" y="12" width="4" height="3" fill="#3a3a3a"/><rect x="6" y="4" width="4" height="3" fill="#3a3a3a"/><rect x="6" y="8" width="4" height="3" fill="#3a3a3a"/><rect x="6" y="12" width="4" height="3" fill="#3a3a3a"/><rect x="11" y="4" width="4" height="3" fill="#3a3a3a"/><rect x="11" y="8" width="4" height="3" fill="#3a3a3a"/><rect x="11" y="12" width="4" height="3" fill="#3a3a3a"/></svg>
<span class="t" style="top:517.84px;font-size:12px;line-height:12px;color:#e8e8e8;left:56.5px;transform-origin:0 0;transform:scaleX(0.91);">FactSalesQuota</span>
<svg class="a" style="left:16px;top:544px;" width="7" height="6" viewBox="0 0 7 6"><path d="M0 6 L6 6 L6 0 Z" fill="#e6e6e6"/></svg>
<svg class="a" style="left:26px;top:540px;" width="15" height="13" viewBox="0 0 15 13"><path d="M0 1.5 H5 L6.5 3 H15 V13 H0 Z" fill="#e8c170"/><rect x="8" y="0" width="7" height="3" fill="#f0d08a"/></svg>
<span class="t" style="top:541.84px;font-size:12px;line-height:12px;color:#e8e8e8;left:49.5px;transform-origin:0 0;transform:scaleX(0.93);">Other Queries [4]</span>
<svg class="a" style="left:34px;top:563px;" width="16" height="16" viewBox="0 0 16 16"><rect x="0" y="0" width="16" height="16" fill="#fff"/><rect x="1" y="4" width="4" height="3" fill="#3a3a3a"/><rect x="1" y="8" width="4" height="3" fill="#3a3a3a"/><rect x="1" y="12" width="4" height="3" fill="#3a3a3a"/><rect x="6" y="4" width="4" height="3" fill="#3a3a3a"/><rect x="6" y="8" width="4" height="3" fill="#3a3a3a"/><rect x="6" y="12" width="4" height="3" fill="#3a3a3a"/><rect x="11" y="4" width="4" height="3" fill="#3a3a3a"/><rect x="11" y="8" width="4" height="3" fill="#3a3a3a"/><rect x="11" y="12" width="4" height="3" fill="#3a3a3a"/></svg>
<span class="t" style="top:565.84px;font-size:12px;line-height:12px;color:#e8e8e8;left:56.5px;transform-origin:0 0;transform:scaleX(0.91);">Example1</span>
<svg class="a" style="left:34px;top:587px;" width="16" height="16" viewBox="0 0 16 16"><rect x="0" y="0" width="16" height="16" fill="#fff"/><rect x="1" y="4" width="4" height="3" fill="#3a3a3a"/><rect x="1" y="8" width="4" height="3" fill="#3a3a3a"/><rect x="1" y="12" width="4" height="3" fill="#3a3a3a"/><rect x="6" y="4" width="4" height="3" fill="#3a3a3a"/><rect x="6" y="8" width="4" height="3" fill="#3a3a3a"/><rect x="6" y="12" width="4" height="3" fill="#3a3a3a"/><rect x="11" y="4" width="4" height="3" fill="#3a3a3a"/><rect x="11" y="8" width="4" height="3" fill="#3a3a3a"/><rect x="11" y="12" width="4" height="3" fill="#3a3a3a"/></svg>
<span class="t" style="top:589.84px;font-size:12px;line-height:12px;color:#e8e8e8;left:56.5px;transform-origin:0 0;transform:scaleX(0.91);">ExcelEmployees</span>
<svg class="a" style="left:34px;top:611px;" width="16" height="16" viewBox="0 0 16 16"><rect x="0" y="0" width="16" height="16" fill="#fff"/><rect x="1" y="4" width="4" height="3" fill="#3a3a3a"/><rect x="1" y="8" width="4" height="3" fill="#3a3a3a"/><rect x="1" y="12" width="4" height="3" fill="#3a3a3a"/><rect x="6" y="4" width="4" height="3" fill="#3a3a3a"/><rect x="6" y="8" width="4" height="3" fill="#3a3a3a"/><rect x="6" y="12" width="4" height="3" fill="#3a3a3a"/><rect x="11" y="4" width="4" height="3" fill="#3a3a3a"/><rect x="11" y="8" width="4" height="3" fill="#3a3a3a"/><rect x="11" y="12" width="4" height="3" fill="#3a3a3a"/></svg>
<span class="t" style="top:613.84px;font-size:12px;line-height:12px;color:#e8e8e8;left:56.5px;transform-origin:0 0;transform:scaleX(0.91);">SQLEmployees</span>
<svg class="a" style="left:34px;top:635px;" width="16" height="16" viewBox="0 0 16 16"><rect x="0" y="0" width="16" height="16" fill="#fff"/><rect x="1" y="4" width="4" height="3" fill="#3a3a3a"/><rect x="1" y="8" width="4" height="3" fill="#3a3a3a"/><rect x="1" y="12" width="4" height="3" fill="#3a3a3a"/><rect x="6" y="4" width="4" height="3" fill="#3a3a3a"/><rect x="6" y="8" width="4" height="3" fill="#3a3a3a"/><rect x="6" y="12" width="4" height="3" fill="#3a3a3a"/><rect x="11" y="4" width="4" height="3" fill="#3a3a3a"/><rect x="11" y="8" width="4" height="3" fill="#3a3a3a"/><rect x="11" y="12" width="4" height="3" fill="#3a3a3a"/></svg>
<span class="t" style="top:637.84px;font-size:12px;line-height:12px;color:#e8e8e8;left:56.5px;transform-origin:0 0;transform:scaleX(0.91);">TextEmployees</span>
</div></div>
<div class="a" style="left:173px;top:161px;width:595px;height:497px;overflow:hidden;"><div class="a" style="left:-173px;top:-161px;width:1024px;height:662px;">
<div class="a" style="left:173px;top:161px;width:595px;height:497px;background:#f0f0f0;"></div>
<div class="a" style="left:173px;top:161px;width:595px;height:22px;background:#222222;"></div>
<div class="a" style="left:173px;top:182px;width:28px;height:476px;background:#222222;"></div>
<div class="a" style="left:201px;top:161px;width:120px;height:21px;background:#f2c811;"></div>
<div class="a" style="left:201px;top:182px;width:120px;height:1px;background:#3a3000;"></div>
<div class="a" style="left:201px;top:183px;width:120px;height:458px;background:#c9c9c9;"></div>
<div class="a" style="left:201px;top:203px;width:551px;height:1px;background:#dadada;"></div>
<div class="a" style="left:173px;top:204px;width:28px;height:1px;background:#3a3a3a;"></div>
<div class="a" style="left:201px;top:224px;width:551px;height:1px;background:#dadada;"></div>
<div class="a" style="left:173px;top:225px;width:28px;height:1px;background:#3a3a3a;"></div>
<div class="a" style="left:201px;top:245px;width:551px;height:1px;background:#dadada;"></div>
<div class="a" style="left:173px;top:246px;width:28px;height:1px;background:#3a3a3a;"></div>
<div class="a" style="left:201px;top:266px;width:551px;height:1px;background:#dadada;"></div>
<div class="a" style="left:173px;top:267px;width:28px;height:1px;background:#3a3a3a;"></div>
<div class="a" style="left:201px;top:287px;width:551px;height:1px;background:#dadada;"></div>
<div class="a" style="left:173px;top:288px;width:28px;height:1px;background:#3a3a3a;"></div>
<div class="a" style="left:201px;top:308px;width:551px;height:1px;background:#dadada;"></div>
<div class="a" style="left:173px;top:309px;width:28px;height:1px;background:#3a3a3a;"></div>
<div class="a" style="left:201px;top:329px;width:551px;height:1px;background:#dadada;"></div>
<div class="a" style="left:173px;top:330px;width:28px;height:1px;background:#3a3a3a;"></div>
<div class="a" style="left:201px;top:350px;width:551px;height:1px;background:#dadada;"></div>
<div class="a" style="left:173px;top:351px;width:28px;height:1px;background:#3a3a3a;"></div>
<div class="a" style="left:201px;top:371px;width:551px;height:1px;background:#dadada;"></div>
<div class="a" style="left:173px;top:372px;width:28px;height:1px;background:#3a3a3a;"></div>
<div class="a" style="left:201px;top:392px;width:551px;height:1px;background:#dadada;"></div>
<div class="a" style="left:173px;top:393px;width:28px;height:1px;background:#3a3a3a;"></div>
<div class="a" style="left:201px;top:413px;width:551px;height:1px;background:#dadada;"></div>
<div class="a" style="left:173px;top:414px;width:28px;height:1px;background:#3a3a3a;"></div>
<div class="a" style="left:201px;top:434px;width:551px;height:1px;background:#dadada;"></div>
<div class="a" style="left:173px;top:435px;width:28px;height:1px;background:#3a3a3a;"></div>
<div class="a" style="left:201px;top:455px;width:551px;height:1px;background:#dadada;"></div>
<div class="a" style="left:173px;top:456px;width:28px;height:1px;background:#3a3a3a;"></div>
<div class="a" style="left:201px;top:476px;width:551px;height:1px;background:#dadada;"></div>
<div class="a" style="left:173px;top:477px;width:28px;height:1px;background:#3a3a3a;"></div>
<div class="a" style="left:201px;top:497px;width:551px;height:1px;background:#dadada;"></div>
<div class="a" style="left:173px;top:498px;width:28px;height:1px;background:#3a3a3a;"></div>
<div class="a" style="left:201px;top:518px;width:551px;height:1px;background:#dadada;"></div>
<div class="a" style="left:173px;top:519px;width:28px;height:1px;background:#3a3a3a;"></div>
<div class="a" style="left:201px;top:539px;width:551px;height:1px;background:#dadada;"></div>
<div class="a" style="left:173px;top:540px;width:28px;height:1px;background:#3a3a3a;"></div>
<div class="a" style="left:201px;top:560px;width:551px;height:1px;background:#dadada;"></div>
<div class="a" style="left:173px;top:561px;width:28px;height:1px;background:#3a3a3a;"></div>
<div class="a" style="left:201px;top:581px;width:551px;height:1px;background:#dadada;"></div>
<div class="a" style="left:173px;top:582px;width:28px;height:1px;background:#3a3a3a;"></div>
<div class="a" style="left:201px;top:602px;width:551px;height:1px;background:#dadada;"></div>
<div class="a" style="left:173px;top:603px;width:28px;height:1px;background:#3a3a3a;"></div>
<div class="a" style="left:201px;top:623px;width:551px;height:1px;background:#dadada;"></div>
<div class="a" style="left:173px;top:624px;width:28px;height:1px;background:#3a3a3a;"></div>
<div class="a" style="left:173px;top:645px;width:28px;height:1px;background:#3a3a3a;"></div>
<div class="a" style="left:446px;top:182px;width:1px;height:459px;background:#d6d6d6;"></div>
<div class="a" style="left:610px;top:182px;width:1px;height:459px;background:#d6d6d6;"></div>
<div class="a" style="left:702px;top:182px;width:1px;height:459px;background:#d6d6d6;"></div>
<svg class="a" style="left:178px;top:165px;" width="19" height="13" viewBox="0 0 19 13"><rect x="0" y="0" width="13" height="12" fill="#fff"/><rect x="0" y="0" width="13" height="3" fill="#7d9cc4"/><path d="M4.5 3 V12 M8.5 3 V12 M0 3.5 H13 M0 6.5 H13 M0 9.5 H13" stroke="#2a2a2a" stroke-width="0.7"/><path d="M13.5 9 L18.5 9 L16 11.5 Z" fill="#fff"/></svg>
<svg class="a" style="left:203px;top:165px;" width="16" height="16" viewBox="0 0 16 16"><g stroke="#fff2b8" stroke-width="0.35"><text x="0" y="12.5" font-family="Liberation Sans" font-size="11.5" fill="#fff2b8">1</text><text x="5" y="8.5" font-family="Liberation Sans" font-size="11" fill="#fff2b8">2</text><text x="9" y="15.5" font-family="Liberation Sans" font-size="11.5" fill="#fff2b8">3</text></g></svg>
<svg class="a" style="left:324px;top:165px;" width="16" height="16" viewBox="0 0 16 16"><g stroke="#ffffff" stroke-width="0.35"><text x="0" y="12" font-family="Liberation Sans" font-size="11.5" fill="#ffffff">1</text><text x="5" y="8" font-family="Liberation Sans" font-size="11" fill="#ffffff">2</text><text x="9" y="15" font-family="Liberation Sans" font-size="11.5" fill="#ffffff">3</text></g></svg>
<svg class="a" style="left:449px;top:165px;" width="16" height="16" viewBox="0 0 16 16"><g stroke="#ffffff" stroke-width="0.3"><text x="0" y="12" font-family="Liberation Sans" font-size="11.5" fill="#ffffff">A</text><text x="6.5" y="7" font-family="Liberation Sans" font-size="9.5" fill="#ffffff">B</text><text x="9.5" y="15" font-family="Liberation Sans" font-size="11" fill="#ffffff">C</text></g></svg>
<svg class="a" style="left:612px;top:165px;" width="16" height="16" viewBox="0 0 16 16"><g stroke="#ffffff" stroke-width="0.3"><text x="0" y="12" font-family="Liberation Sans" font-size="11.5" fill="#ffffff">A</text><text x="6.5" y="7" font-family="Liberation Sans" font-size="9.5" fill="#ffffff">B</text><text x="9.5" y="15" font-family="Liberation Sans" font-size="11" fill="#ffffff">C</text></g></svg>
<svg class="a" style="left:705px;top:165px;" width="16" height="16" viewBox="0 0 16 16"><g stroke="#ffffff" stroke-width="0.3"><text x="0" y="12" font-family="Liberation Sans" font-size="11.5" fill="#ffffff">A</text><text x="6.5" y="7" font-family="Liberation Sans" font-size="9.5" fill="#ffffff">B</text><text x="9.5" y="15" font-family="Liberation Sans" font-size="11" fill="#ffffff">C</text></g></svg>
<span class="t" style="top:166.14px;font-size:12px;line-height:12px;color:#3a2f05;font-weight:700;left:224px;transform-origin:0 0;transform:scaleX(0.8);">CustomerKey</span>
<span class="t" style="top:166.14px;font-size:12px;line-height:12px;color:#fff;font-weight:700;left:344.9px;transform-origin:0 0;transform:scaleX(0.8);">GeographyKey</span>
<span class="t" style="top:166.14px;font-size:12px;line-height:12px;color:#fff;font-weight:700;left:469.9px;transform-origin:0 0;transform:scaleX(0.83);">CustomerAlternateKey</span>
<span class="t" style="top:166.14px;font-size:12px;line-height:12px;color:#fff;font-weight:700;left:633.7px;transform-origin:0 0;transform:scaleX(0.82);">Title</span>
<span class="t" style="top:166.14px;font-size:12px;line-height:12px;color:#fff;font-weight:700;left:726px;transform-origin:0 0;transform:scaleX(0.82);clip-path:inset(0 0 0 0);">FirstName</span>
<svg class="a" style="left:304px;top:164px;" width="15" height="16" viewBox="0 0 15 16"><rect x="0.5" y="0.5" width="14" height="15" fill="#f7f7f7" stroke="#9a9a9a"/><path d="M4.5 6.5 L10.5 6.5 L7.5 9 Z" fill="#555"/></svg>
<svg class="a" style="left:429.5px;top:164px;" width="15" height="16" viewBox="0 0 15 16"><rect x="0.5" y="0.5" width="14" height="15" fill="#f7f7f7" stroke="#9a9a9a"/><path d="M4.5 6.5 L10.5 6.5 L7.5 9 Z" fill="#555"/></svg>
<svg class="a" style="left:592.5px;top:164px;" width="15" height="16" viewBox="0 0 15 16"><rect x="0.5" y="0.5" width="14" height="15" fill="#f7f7f7" stroke="#9a9a9a"/><path d="M4.5 6.5 L10.5 6.5 L7.5 9 Z" fill="#555"/></svg>
<svg class="a" style="left:685px;top:164px;" width="15" height="16" viewBox="0 0 15 16"><rect x="0.5" y="0.5" width="14" height="15" fill="#f7f7f7" stroke="#9a9a9a"/><path d="M4.5 6.5 L10.5 6.5 L7.5 9 Z" fill="#555"/></svg>
<span class="t" style="top:188.00px;font-size:13px;line-height:13px;color:#fff;left:187px;transform-origin:0 0;transform:scaleX(0.9) translateX(-50%);">1</span>
<span class="t" style="top:186.84px;font-size:12px;line-height:12px;color:#4a4a4a;font-style:italic;right:705.8px;transform-origin:100% 0;transform:scaleX(0.88);">11000</span>
<span class="t" style="top:186.84px;font-size:12px;line-height:12px;color:#4a4a4a;font-style:italic;right:580.3px;transform-origin:100% 0;transform:scaleX(0.88);">26</span>
<span class="t" style="top:186.84px;font-size:12px;line-height:12px;color:#444;left:450.4px;transform-origin:0 0;transform:scaleX(0.874);">AW00011000</span>
<span class="t" style="top:186.84px;font-size:12px;line-height:12px;color:#4a4a4a;font-style:italic;right:325px;transform-origin:100% 0;transform:scaleX(0.9);">null</span>
<span class="t" style="top:186.84px;font-size:12px;line-height:12px;color:#444;left:706px;transform-origin:0 0;transform:scaleX(0.82);">Jon</span>
<span class="t" style="top:209.00px;font-size:13px;line-height:13px;color:#fff;left:187px;transform-origin:0 0;transform:scaleX(0.9) translateX(-50%);">2</span>
<span class="t" style="top:207.84px;font-size:12px;line-height:12px;color:#4a4a4a;font-style:italic;right:705.8px;transform-origin:100% 0;transform:scaleX(0.88);">11001</span>
<span class="t" style="top:207.84px;font-size:12px;line-height:12px;color:#4a4a4a;font-style:italic;right:580.3px;transform-origin:100% 0;transform:scaleX(0.88);">37</span>
<span class="t" style="top:207.84px;font-size:12px;line-height:12px;color:#444;left:450.4px;transform-origin:0 0;transform:scaleX(0.874);">AW00011001</span>
<span class="t" style="top:207.84px;font-size:12px;line-height:12px;color:#4a4a4a;font-style:italic;right:325px;transform-origin:100% 0;transform:scaleX(0.9);">null</span>
<span class="t" style="top:207.84px;font-size:12px;line-height:12px;color:#444;left:706px;transform-origin:0 0;transform:scaleX(0.82);">Eugene</span>
<span class="t" style="top:230.00px;font-size:13px;line-height:13px;color:#fff;left:187px;transform-origin:0 0;transform:scaleX(0.9) translateX(-50%);">3</span>
<span class="t" style="top:228.84px;font-size:12px;line-height:12px;color:#4a4a4a;font-style:italic;right:705.8px;transform-origin:100% 0;transform:scaleX(0.88);">11002</span>
<span class="t" style="top:228.84px;font-size:12px;line-height:12px;color:#4a4a4a;font-style:italic;right:580.3px;transform-origin:100% 0;transform:scaleX(0.88);">31</span>
<span class="t" style="top:228.84px;font-size:12px;line-height:12px;color:#444;left:450.4px;transform-origin:0 0;transform:scaleX(0.874);">AW00011002</span>
<span class="t" style="top:228.84px;font-size:12px;line-height:12px;color:#4a4a4a;font-style:italic;right:325px;transform-origin:100% 0;transform:scaleX(0.9);">null</span>
<span class="t" style="top:228.84px;font-size:12px;line-height:12px;color:#444;left:706px;transform-origin:0 0;transform:scaleX(0.82);">Ruben</span>
<span class="t" style="top:251.00px;font-size:13px;line-height:13px;color:#fff;left:187px;transform-origin:0 0;transform:scaleX(0.9) translateX(-50%);">4</span>
<span class="t" style="top:249.84px;font-size:12px;line-height:12px;color:#4a4a4a;font-style:italic;right:705.8px;transform-origin:100% 0;transform:scaleX(0.88);">11003</span>
<span class="t" style="top:249.84px;font-size:12px;line-height:12px;color:#4a4a4a;font-style:italic;right:580.3px;transform-origin:100% 0;transform:scaleX(0.88);">11</span>
<span class="t" style="top:249.84px;font-size:12px;line-height:12px;color:#444;left:450.4px;transform-origin:0 0;transform:scaleX(0.874);">AW00011003</span>
<span class="t" style="top:249.84px;font-size:12px;line-height:12px;color:#4a4a4a;font-style:italic;right:325px;transform-origin:100% 0;transform:scaleX(0.9);">null</span>
<span class="t" style="top:249.84px;font-size:12px;line-height:12px;color:#444;left:706px;transform-origin:0 0;transform:scaleX(0.82);">Christy</span>
<span class="t" style="top:272.00px;font-size:13px;line-height:13px;color:#fff;left:187px;transform-origin:0 0;transform:scaleX(0.9) translateX(-50%);">5</span>
<span class="t" style="top:270.84px;font-size:12px;line-height:12px;color:#4a4a4a;font-style:italic;right:705.8px;transform-origin:100% 0;transform:scaleX(0.88);">11004</span>
<span class="t" style="top:270.84px;font-size:12px;line-height:12px;color:#4a4a4a;font-style:italic;right:580.3px;transform-origin:100% 0;transform:scaleX(0.88);">19</span>
<span class="t" style="top:270.84px;font-size:12px;line-height:12px;color:#444;left:450.4px;transform-origin:0 0;transform:scaleX(0.874);">AW00011004</span>
<span class="t" style="top:270.84px;font-size:12px;line-height:12px;color:#4a4a4a;font-style:italic;right:325px;transform-origin:100% 0;transform:scaleX(0.9);">null</span>
<span class="t" style="top:270.84px;font-size:12px;line-height:12px;color:#444;left:706px;transform-origin:0 0;transform:scaleX(0.82);">Elizabeth</span>
<span class="t" style="top:293.00px;font-size:13px;line-height:13px;color:#fff;left:187px;transform-origin:0 0;transform:scaleX(0.9) translateX(-50%);">6</span>
<span class="t" style="top:291.84px;font-size:12px;line-height:12px;color:#4a4a4a;font-style:italic;right:705.8px;transform-origin:100% 0;transform:scaleX(0.88);">11005</span>
<span class="t" style="top:291.84px;font-size:12px;line-height:12px;color:#4a4a4a;font-style:italic;right:580.3px;transform-origin:100% 0;transform:scaleX(0.88);">22</span>
<span class="t" style="top:291.84px;font-size:12px;line-height:12px;color:#444;left:450.4px;transform-origin:0 0;transform:scaleX(0.874);">AW00011005</span>
<span class="t" style="top:291.84px;font-size:12px;line-height:12px;color:#4a4a4a;font-style:italic;right:325px;transform-origin:100% 0;transform:scaleX(0.9);">null</span>
<span class="t" style="top:291.84px;font-size:12px;line-height:12px;color:#444;left:706px;transform-origin:0 0;transform:scaleX(0.82);">Julio</span>
<span class="t" style="top:314.00px;font-size:13px;line-height:13px;color:#fff;left:187px;transform-origin:0 0;transform:scaleX(0.9) translateX(-50%);">7</span>
<span class="t" style="top:312.84px;font-size:12px;line-height:12px;color:#4a4a4a;font-style:italic;right:705.8px;transform-origin:100% 0;transform:scaleX(0.88);">11006</span>
<span class="t" style="top:312.84px;font-size:12px;line-height:12px;color:#4a4a4a;font-style:italic;right:580.3px;transform-origin:100% 0;transform:scaleX(0.88);">8</span>
<span class="t" style="top:312.84px;font-size:12px;line-height:12px;color:#444;left:450.4px;transform-origin:0 0;transform:scaleX(0.874);">AW00011006</span>
<span class="t" style="top:312.84px;font-size:12px;line-height:12px;color:#4a4a4a;font-style:italic;right:325px;transform-origin:100% 0;transform:scaleX(0.9);">null</span>
<span class="t" style="top:312.84px;font-size:12px;line-height:12px;color:#444;left:706px;transform-origin:0 0;transform:scaleX(0.82);">Janet</span>
<span class="t" style="top:335.00px;font-size:13px;line-height:13px;color:#fff;left:187px;transform-origin:0 0;transform:scaleX(0.9) translateX(-50%);">8</span>
<span class="t" style="top:333.84px;font-size:12px;line-height:12px;color:#4a4a4a;font-style:italic;right:705.8px;transform-origin:100% 0;transform:scaleX(0.88);">11007</span>
<span class="t" style="top:333.84px;font-size:12px;line-height:12px;color:#4a4a4a;font-style:italic;right:580.3px;transform-origin:100% 0;transform:scaleX(0.88);">40</span>
<span class="t" style="top:333.84px;font-size:12px;line-height:12px;color:#444;left:450.4px;transform-origin:0 0;transform:scaleX(0.874);">AW00011007</span>
<span class="t" style="top:333.84px;font-size:12px;line-height:12px;color:#4a4a4a;font-style:italic;right:325px;transform-origin:100% 0;transform:scaleX(0.9);">null</span>
<span class="t" style="top:333.84px;font-size:12px;line-height:12px;color:#444;left:706px;transform-origin:0 0;transform:scaleX(0.82);">Marco</span>
<span class="t" style="top:356.00px;font-size:13px;line-height:13px;color:#fff;left:187px;transform-origin:0 0;transform:scaleX(0.9) translateX(-50%);">9</span>
<span class="t" style="top:354.84px;font-size:12px;line-height:12px;color:#4a4a4a;font-style:italic;right:705.8px;transform-origin:100% 0;transform:scaleX(0.88);">11008</span>
<span class="t" style="top:354.84px;font-size:12px;line-height:12px;color:#4a4a4a;font-style:italic;right:580.3px;transform-origin:100% 0;transform:scaleX(0.88);">32</span>
<span class="t" style="top:354.84px;font-size:12px;line-height:12px;color:#444;left:450.4px;transform-origin:0 0;transform:scaleX(0.874);">AW00011008</span>
<span class="t" style="top:354.84px;font-size:12px;line-height:12px;color:#4a4a4a;font-style:italic;right:325px;transform-origin:100% 0;transform:scaleX(0.9);">null</span>
<span class="t" style="top:354.84px;font-size:12px;line-height:12px;color:#444;left:706px;transform-origin:0 0;transform:scaleX(0.82);">Rob</span>
<span class="t" style="top:377.00px;font-size:13px;line-height:13px;color:#fff;left:187px;transform-origin:0 0;transform:scaleX(0.9) translateX(-50%);">10</span>
<span class="t" style="top:375.84px;font-size:12px;line-height:12px;color:#4a4a4a;font-style:italic;right:705.8px;transform-origin:100% 0;transform:scaleX(0.88);">11009</span>
<span class="t" style="top:375.84px;font-size:12px;line-height:12px;color:#4a4a4a;font-style:italic;right:580.3px;transform-origin:100% 0;transform:scaleX(0.88);">25</span>
<span class="t" style="top:375.84px;font-size:12px;line-height:12px;color:#444;left:450.4px;transform-origin:0 0;transform:scaleX(0.874);">AW00011009</span>
<span class="t" style="top:375.84px;font-size:12px;line-height:12px;color:#4a4a4a;font-style:italic;right:325px;transform-origin:100% 0;transform:scaleX(0.9);">null</span>
<span class="t" style="top:375.84px;font-size:12px;line-height:12px;color:#444;left:706px;transform-origin:0 0;transform:scaleX(0.82);">Shannon</span>
<span class="t" style="top:398.00px;font-size:13px;line-height:13px;color:#fff;left:187px;transform-origin:0 0;transform:scaleX(0.9) translateX(-50%);">11</span>
<span class="t" style="top:396.84px;font-size:12px;line-height:12px;color:#4a4a4a;font-style:italic;right:705.8px;transform-origin:100% 0;transform:scaleX(0.88);">11010</span>
<span class="t" style="top:396.84px;font-size:12px;line-height:12px;color:#4a4a4a;font-style:italic;right:580.3px;transform-origin:100% 0;transform:scaleX(0.88);">22</span>
<span class="t" style="top:396.84px;font-size:12px;line-height:12px;color:#444;left:450.4px;transform-origin:0 0;transform:scaleX(0.874);">AW00011010</span>
<span class="t" style="top:396.84px;font-size:12px;line-height:12px;color:#4a4a4a;font-style:italic;right:325px;transform-origin:100% 0;transform:scaleX(0.9);">null</span>
<span class="t" style="top:396.84px;font-size:12px;line-height:12px;color:#444;left:706px;transform-origin:0 0;transform:scaleX(0.82);">Jacquelyn</span>
<span class="t" style="top:419.00px;font-size:13px;line-height:13px;color:#fff;left:187px;transform-origin:0 0;transform:scaleX(0.9) translateX(-50%);">12</span>
<span class="t" style="top:417.84px;font-size:12px;line-height:12px;color:#4a4a4a;font-style:italic;right:705.8px;transform-origin:100% 0;transform:scaleX(0.88);">11011</span>
<span class="t" style="top:417.84px;font-size:12px;line-height:12px;color:#4a4a4a;font-style:italic;right:580.3px;transform-origin:100% 0;transform:scaleX(0.88);">22</span>
<span class="t" style="top:417.84px;font-size:12px;line-height:12px;color:#444;left:450.4px;transform-origin:0 0;transform:scaleX(0.874);">AW00011011</span>
<span class="t" style="top:417.84px;font-size:12px;line-height:12px;color:#4a4a4a;font-style:italic;right:325px;transform-origin:100% 0;transform:scaleX(0.9);">null</span>
<span class="t" style="top:417.84px;font-size:12px;line-height:12px;color:#444;left:706px;transform-origin:0 0;transform:scaleX(0.82);">Curtis</span>
<span class="t" style="top:440.00px;font-size:13px;line-height:13px;color:#fff;left:187px;transform-origin:0 0;transform:scaleX(0.9) translateX(-50%);">13</span>
<span class="t" style="top:438.84px;font-size:12px;line-height:12px;color:#4a4a4a;font-style:italic;right:705.8px;transform-origin:100% 0;transform:scaleX(0.88);">11012</span>
<span class="t" style="top:438.84px;font-size:12px;line-height:12px;color:#4a4a4a;font-style:italic;right:580.3px;transform-origin:100% 0;transform:scaleX(0.88);">611</span>
<span class="t" style="top:438.84px;font-size:12px;line-height:12px;color:#444;left:450.4px;transform-origin:0 0;transform:scaleX(0.874);">AW00011012</span>
<span class="t" style="top:438.84px;font-size:12px;line-height:12px;color:#4a4a4a;font-style:italic;right:325px;transform-origin:100% 0;transform:scaleX(0.9);">null</span>
<span class="t" style="top:438.84px;font-size:12px;line-height:12px;color:#444;left:706px;transform-origin:0 0;transform:scaleX(0.82);">Lauren</span>
<span class="t" style="top:461.00px;font-size:13px;line-height:13px;color:#fff;left:187px;transform-origin:0 0;transform:scaleX(0.9) translateX(-50%);">14</span>
<span class="t" style="top:459.84px;font-size:12px;line-height:12px;color:#4a4a4a;font-style:italic;right:705.8px;transform-origin:100% 0;transform:scaleX(0.88);">11013</span>
<span class="t" style="top:459.84px;font-size:12px;line-height:12px;color:#4a4a4a;font-style:italic;right:580.3px;transform-origin:100% 0;transform:scaleX(0.88);">543</span>
<span class="t" style="top:459.84px;font-size:12px;line-height:12px;color:#444;left:450.4px;transform-origin:0 0;transform:scaleX(0.874);">AW00011013</span>
<span class="t" style="top:459.84px;font-size:12px;line-height:12px;color:#4a4a4a;font-style:italic;right:325px;transform-origin:100% 0;transform:scaleX(0.9);">null</span>
<span class="t" style="top:459.84px;font-size:12px;line-height:12px;color:#444;left:706px;transform-origin:0 0;transform:scaleX(0.82);">Ian</span>
<span class="t" style="top:482.00px;font-size:13px;line-height:13px;color:#fff;left:187px;transform-origin:0 0;transform:scaleX(0.9) translateX(-50%);">15</span>
<span class="t" style="top:480.84px;font-size:12px;line-height:12px;color:#4a4a4a;font-style:italic;right:705.8px;transform-origin:100% 0;transform:scaleX(0.88);">11014</span>
<span class="t" style="top:480.84px;font-size:12px;line-height:12px;color:#4a4a4a;font-style:italic;right:580.3px;transform-origin:100% 0;transform:scaleX(0.88);">634</span>
<span class="t" style="top:480.84px;font-size:12px;line-height:12px;color:#444;left:450.4px;transform-origin:0 0;transform:scaleX(0.874);">AW00011014</span>
<span class="t" style="top:480.84px;font-size:12px;line-height:12px;color:#4a4a4a;font-style:italic;right:325px;transform-origin:100% 0;transform:scaleX(0.9);">null</span>
<span class="t" style="top:480.84px;font-size:12px;line-height:12px;color:#444;left:706px;transform-origin:0 0;transform:scaleX(0.82);">Sydney</span>
<span class="t" style="top:503.00px;font-size:13px;line-height:13px;color:#fff;left:187px;transform-origin:0 0;transform:scaleX(0.9) translateX(-50%);">16</span>
<span class="t" style="top:501.84px;font-size:12px;line-height:12px;color:#4a4a4a;font-style:italic;right:705.8px;transform-origin:100% 0;transform:scaleX(0.88);">11015</span>
<span class="t" style="top:501.84px;font-size:12px;line-height:12px;color:#4a4a4a;font-style:italic;right:580.3px;transform-origin:100% 0;transform:scaleX(0.88);">301</span>
<span class="t" style="top:501.84px;font-size:12px;line-height:12px;color:#444;left:450.4px;transform-origin:0 0;transform:scaleX(0.874);">AW00011015</span>
<span class="t" style="top:501.84px;font-size:12px;line-height:12px;color:#4a4a4a;font-style:italic;right:325px;transform-origin:100% 0;transform:scaleX(0.9);">null</span>
<span class="t" style="top:501.84px;font-size:12px;line-height:12px;color:#444;left:706px;transform-origin:0 0;transform:scaleX(0.82);">Chloe</span>
<span class="t" style="top:524.00px;font-size:13px;line-height:13px;color:#fff;left:187px;transform-origin:0 0;transform:scaleX(0.9) translateX(-50%);">17</span>
<span class="t" style="top:522.84px;font-size:12px;line-height:12px;color:#4a4a4a;font-style:italic;right:705.8px;transform-origin:100% 0;transform:scaleX(0.88);">11016</span>
<span class="t" style="top:522.84px;font-size:12px;line-height:12px;color:#4a4a4a;font-style:italic;right:580.3px;transform-origin:100% 0;transform:scaleX(0.88);">329</span>
<span class="t" style="top:522.84px;font-size:12px;line-height:12px;color:#444;left:450.4px;transform-origin:0 0;transform:scaleX(0.874);">AW00011016</span>
<span class="t" style="top:522.84px;font-size:12px;line-height:12px;color:#4a4a4a;font-style:italic;right:325px;transform-origin:100% 0;transform:scaleX(0.9);">null</span>
<span class="t" style="top:522.84px;font-size:12px;line-height:12px;color:#444;left:706px;transform-origin:0 0;transform:scaleX(0.82);">Wyatt</span>
<span class="t" style="top:545.00px;font-size:13px;line-height:13px;color:#fff;left:187px;transform-origin:0 0;transform:scaleX(0.9) translateX(-50%);">18</span>
<span class="t" style="top:543.84px;font-size:12px;line-height:12px;color:#4a4a4a;font-style:italic;right:705.8px;transform-origin:100% 0;transform:scaleX(0.88);">11017</span>
<span class="t" style="top:543.84px;font-size:12px;line-height:12px;color:#4a4a4a;font-style:italic;right:580.3px;transform-origin:100% 0;transform:scaleX(0.88);">39</span>
<span class="t" style="top:543.84px;font-size:12px;line-height:12px;color:#444;left:450.4px;transform-origin:0 0;transform:scaleX(0.874);">AW00011017</span>
<span class="t" style="top:543.84px;font-size:12px;line-height:12px;color:#4a4a4a;font-style:italic;right:325px;transform-origin:100% 0;transform:scaleX(0.9);">null</span>
<span class="t" style="top:543.84px;font-size:12px;line-height:12px;color:#444;left:706px;transform-origin:0 0;transform:scaleX(0.82);">Shannon</span>
<span class="t" style="top:566.00px;font-size:13px;line-height:13px;color:#fff;left:187px;transform-origin:0 0;transform:scaleX(0.9) translateX(-50%);">19</span>
<span class="t" style="top:564.84px;font-size:12px;line-height:12px;color:#4a4a4a;font-style:italic;right:705.8px;transform-origin:100% 0;transform:scaleX(0.88);">11018</span>
<span class="t" style="top:564.84px;font-size:12px;line-height:12px;color:#4a4a4a;font-style:italic;right:580.3px;transform-origin:100% 0;transform:scaleX(0.88);">32</span>
<span class="t" style="top:564.84px;font-size:12px;line-height:12px;color:#444;left:450.4px;transform-origin:0 0;transform:scaleX(0.874);">AW00011018</span>
<span class="t" style="top:564.84px;font-size:12px;line-height:12px;color:#4a4a4a;font-style:italic;right:325px;transform-origin:100% 0;transform:scaleX(0.9);">null</span>
<span class="t" style="top:564.84px;font-size:12px;line-height:12px;color:#444;left:706px;transform-origin:0 0;transform:scaleX(0.82);">Clarence</span>
<span class="t" style="top:587.00px;font-size:13px;line-height:13px;color:#fff;left:187px;transform-origin:0 0;transform:scaleX(0.9) translateX(-50%);">20</span>
<span class="t" style="top:585.84px;font-size:12px;line-height:12px;color:#4a4a4a;font-style:italic;right:705.8px;transform-origin:100% 0;transform:scaleX(0.88);">11019</span>
<span class="t" style="top:585.84px;font-size:12px;line-height:12px;color:#4a4a4a;font-style:italic;right:580.3px;transform-origin:100% 0;transform:scaleX(0.88);">52</span>
<span class="t" style="top:585.84px;font-size:12px;line-height:12px;color:#444;left:450.4px;transform-origin:0 0;transform:scaleX(0.874);">AW00011019</span>
<span class="t" style="top:585.84px;font-size:12px;line-height:12px;color:#4a4a4a;font-style:italic;right:325px;transform-origin:100% 0;transform:scaleX(0.9);">null</span>
<span class="t" style="top:585.84px;font-size:12px;line-height:12px;color:#444;left:706px;transform-origin:0 0;transform:scaleX(0.82);">Luke</span>
<span class="t" style="top:608.00px;font-size:13px;line-height:13px;color:#fff;left:187px;transform-origin:0 0;transform:scaleX(0.9) translateX(-50%);">21</span>
<span class="t" style="top:606.84px;font-size:12px;line-height:12px;color:#4a4a4a;font-style:italic;right:705.8px;transform-origin:100% 0;transform:scaleX(0.88);">11020</span>
<span class="t" style="top:606.84px;font-size:12px;line-height:12px;color:#4a4a4a;font-style:italic;right:580.3px;transform-origin:100% 0;transform:scaleX(0.88);">53</span>
<span class="t" style="top:606.84px;font-size:12px;line-height:12px;color:#444;left:450.4px;transform-origin:0 0;transform:scaleX(0.874);">AW00011020</span>
<span class="t" style="top:606.84px;font-size:12px;line-height:12px;color:#4a4a4a;font-style:italic;right:325px;transform-origin:100% 0;transform:scaleX(0.9);">null</span>
<span class="t" style="top:606.84px;font-size:12px;line-height:12px;color:#444;left:706px;transform-origin:0 0;transform:scaleX(0.82);">Jordan</span>
<span class="t" style="top:629.00px;font-size:13px;line-height:13px;color:#fff;left:187px;transform-origin:0 0;transform:scaleX(0.9) translateX(-50%);">22</span>
<span class="t" style="top:627.84px;font-size:12px;line-height:12px;color:#4a4a4a;font-style:italic;right:705.8px;transform-origin:100% 0;transform:scaleX(0.88);">11021</span>
<span class="t" style="top:627.84px;font-size:12px;line-height:12px;color:#4a4a4a;font-style:italic;right:580.3px;transform-origin:100% 0;transform:scaleX(0.88);">536</span>
<span class="t" style="top:627.84px;font-size:12px;line-height:12px;color:#444;left:450.4px;transform-origin:0 0;transform:scaleX(0.874);">AW00011021</span>
<span class="t" style="top:627.84px;font-size:12px;line-height:12px;color:#4a4a4a;font-style:italic;right:325px;transform-origin:100% 0;transform:scaleX(0.9);">null</span>
<span class="t" style="top:627.84px;font-size:12px;line-height:12px;color:#444;left:706px;transform-origin:0 0;transform:scaleX(0.82);">Destiny</span>
<span class="t" style="top:650.00px;font-size:13px;line-height:13px;color:#fff;left:187px;transform-origin:0 0;transform:scaleX(0.9) translateX(-50%);">23</span>
<div class="a" style="left:752px;top:199px;width:16px;height:442px;background:#f0f0f0;"></div>
<svg class="a" style="left:755px;top:201px;" width="11" height="8" viewBox="0 0 11 8"><path d="M1 7 L5.5 2 L10 7" fill="none" stroke="#606060" stroke-width="2.2"/></svg>
<div class="a" style="left:753px;top:216px;width:14px;height:169px;background:#cdcdcd;"></div>
<svg class="a" style="left:755px;top:616px;" width="11" height="8" viewBox="0 0 11 8"><path d="M1 1 L5.5 6 L10 1" fill="none" stroke="#606060" stroke-width="2.2"/></svg>
<div class="a" style="left:201px;top:641px;width:567px;height:17px;background:#f0f0f0;"></div>
<svg class="a" style="left:217px;top:644px;" width="9" height="11" viewBox="0 0 9 11"><path d="M7.5 1 L2 5.5 L7.5 10" fill="none" stroke="#606060" stroke-width="2.2"/></svg>
<div class="a" style="left:233px;top:641px;width:61px;height:16px;background:#cdcdcd;"></div>
<svg class="a" style="left:728px;top:644px;" width="9" height="11" viewBox="0 0 9 11"><path d="M1.5 1 L7 5.5 L1.5 10" fill="none" stroke="#606060" stroke-width="2.2"/></svg>
</div></div>
<div class="a" style="left:768px;top:147px;width:4px;height:511px;background:#777777;"></div>
<span class="t" style="top:165.15px;font-size:14px;line-height:14px;color:#fff;left:786px;transform-origin:0 0;transform:scaleX(0.865);-webkit-text-stroke:0.25px #fff;">QUERY SETTINGS</span>
<svg class="a" style="left:991px;top:168px;" width="11" height="11" viewBox="0 0 11 11"><path d="M0.5 0.5 L10.5 10.5 M10.5 0.5 L0.5 10.5" stroke="#fff" stroke-width="1.3"/></svg>
<svg class="a" style="left:782px;top:212px;" width="6" height="6" viewBox="0 0 6 6"><path d="M0 6 L6 6 L6 0 Z" fill="#e0e0e0"/></svg>
<span class="t" style="top:208.84px;font-size:12px;line-height:12px;color:#fff;font-weight:700;left:794.7px;transform-origin:0 0;transform:scaleX(0.84);">PROPERTIES</span>
<span class="t" style="top:227.70px;font-size:13px;line-height:13px;color:#e8e8e8;left:794.7px;transform-origin:0 0;transform:scaleX(0.88);">Name</span>
<div class="a" style="left:795px;top:244px;width:205px;height:21px;background:#2e2e2e;border:1px solid #1c1c1c;box-sizing:border-box;"></div>
<span class="t" style="top:249.00px;font-size:13px;line-height:13px;color:#e8e8e8;left:800.4px;transform-origin:0 0;transform:scaleX(0.88);">DimCustomer</span>
<span class="t" style="top:274.50px;font-size:13px;line-height:13px;color:#e8c010;left:794.7px;transform-origin:0 0;transform:scaleX(0.87);">All Properties</span>
<div class="a" style="left:795px;top:289px;width:67px;height:1px;background:#e8c010;"></div>
<svg class="a" style="left:782px;top:313px;" width="6" height="6" viewBox="0 0 6 6"><path d="M0 6 L6 6 L6 0 Z" fill="#e0e0e0"/></svg>
<span class="t" style="top:309.34px;font-size:12px;line-height:12px;color:#fff;font-weight:700;left:795.2px;transform-origin:0 0;transform:scaleX(0.845);">APPLIED STEPS</span>
<div class="a" style="left:795px;top:329px;width:205px;height:309px;background:#333333;border:1px solid #1c1c1c;box-sizing:border-box;"></div>
<div class="a" style="left:796px;top:350px;width:203px;height:20px;background:#626262;"></div>
<div class="a" style="left:795px;top:350px;width:2px;height:20px;background:#f2c811;"></div>
<span class="t" style="top:333.30px;font-size:13px;line-height:13px;color:#f0f0f0;left:816.6px;transform-origin:0 0;transform:scaleX(0.9);">Source</span>
<span class="t" style="top:353.30px;font-size:13px;line-height:13px;color:#f0f0f0;left:816.6px;transform-origin:0 0;transform:scaleX(0.87);">Navigation</span>
<svg class="a" style="left:802px;top:356px;" width="10" height="10" viewBox="0 0 10 10"><path d="M0.5 0.5 L9.5 9.5 M9.5 0.5 L0.5 9.5" stroke="#f0f0f0" stroke-width="1.3"/></svg>
<svg class="a" style="left:981.5px;top:335px;" width="11" height="11" viewBox="0 0 11 11"><g transform="translate(5.5 5.5)" fill="#fff"><circle r="3.3"/><rect x="-1.5" y="-5.2" width="3" height="10.4" transform="rotate(30)"/><rect x="-1.5" y="-5.2" width="3" height="10.4" transform="rotate(90)"/><rect x="-1.5" y="-5.2" width="3" height="10.4" transform="rotate(150)"/><circle r="1.2" fill="#333"/></g></svg>
<svg class="a" style="left:981.5px;top:355px;" width="11" height="11" viewBox="0 0 11 11"><g transform="translate(5.5 5.5)" fill="#fff"><circle r="3.3"/><rect x="-1.5" y="-5.2" width="3" height="10.4" transform="rotate(30)"/><rect x="-1.5" y="-5.2" width="3" height="10.4" transform="rotate(90)"/><rect x="-1.5" y="-5.2" width="3" height="10.4" transform="rotate(150)"/><circle r="1.2" fill="#333"/></g></svg>
<div class="a" style="left:119px;top:262px;width:189px;height:369px;background:#ffffff;box-shadow:1px 1px 0 rgba(0,0,0,0.35), 2px 2px 3px rgba(0,0,0,0.35);"></div>
<div class="a" style="left:120px;top:331px;width:188px;height:31px;background:#7a1a24;"></div>
<div class="a" style="left:123px;top:334px;width:182px;height:26px;background:#ffffff;"></div>
<div class="a" style="left:123px;top:334px;width:182px;height:23px;background:#c9c9c9;"></div>
<span class="t" style="top:268.34px;font-size:12px;line-height:12px;color:#3c3c3c;left:153.2px;transform-origin:0 0;transform:scaleX(0.9);">Copy</span>
<span class="t" style="top:289.84px;font-size:12px;line-height:12px;color:#a6a6a6;left:153.2px;transform-origin:0 0;transform:scaleX(0.9);">Paste</span>
<div class="a" style="left:150px;top:310px;width:156px;height:1px;background:#e3e3e3;"></div>
<span class="t" style="top:317.84px;font-size:12px;line-height:12px;color:#3c3c3c;left:153.2px;transform-origin:0 0;transform:scaleX(0.9);">Delete</span>
<span class="t" style="top:339.84px;font-size:12px;line-height:12px;color:#3c3c3c;left:153.2px;transform-origin:0 0;transform:scaleX(0.9);">Rename</span>
<span class="t" style="top:367.84px;font-size:12px;line-height:12px;color:#3c3c3c;left:153.2px;transform-origin:0 0;transform:scaleX(0.9);">Enable load</span>
<span class="t" style="top:389.84px;font-size:12px;line-height:12px;color:#3c3c3c;left:153.2px;transform-origin:0 0;transform:scaleX(0.934);">Include in report refresh</span>
<div class="a" style="left:150px;top:410px;width:156px;height:1px;background:#e3e3e3;"></div>
<span class="t" style="top:417.84px;font-size:12px;line-height:12px;color:#3c3c3c;left:153.2px;transform-origin:0 0;transform:scaleX(0.9);">Duplicate</span>
<span class="t" style="top:439.84px;font-size:12px;line-height:12px;color:#3c3c3c;left:153.2px;transform-origin:0 0;transform:scaleX(0.9);">Reference</span>
<div class="a" style="left:150px;top:460px;width:156px;height:1px;background:#e3e3e3;"></div>
<span class="t" style="top:467.84px;font-size:12px;line-height:12px;color:#3c3c3c;left:153.2px;transform-origin:0 0;transform:scaleX(0.9);">Move To Group</span>
<svg class="a" style="left:293px;top:471px;" width="4" height="7" viewBox="0 0 4 7"><path d="M0 0 L4 3.5 L0 7 Z" fill="#555"/></svg>
<span class="t" style="top:489.84px;font-size:12px;line-height:12px;color:#3c3c3c;left:153.2px;transform-origin:0 0;transform:scaleX(0.9);">Move Up</span>
<span class="t" style="top:511.84px;font-size:12px;line-height:12px;color:#3c3c3c;left:153.2px;transform-origin:0 0;transform:scaleX(0.9);">Move Down</span>
<div class="a" style="left:150px;top:532px;width:156px;height:1px;background:#e3e3e3;"></div>
<span class="t" style="top:539.84px;font-size:12px;line-height:12px;color:#3c3c3c;left:153.2px;transform-origin:0 0;transform:scaleX(0.9);">Create Function...</span>
<span class="t" style="top:561.84px;font-size:12px;line-height:12px;color:#a6a6a6;left:153.2px;transform-origin:0 0;transform:scaleX(0.9);">Convert To Parameter</span>
<div class="a" style="left:150px;top:582px;width:156px;height:1px;background:#e3e3e3;"></div>
<span class="t" style="top:589.84px;font-size:12px;line-height:12px;color:#3c3c3c;left:153.2px;transform-origin:0 0;transform:scaleX(0.9);">Advanced Editor</span>
<span class="t" style="top:611.84px;font-size:12px;line-height:12px;color:#3c3c3c;left:153.2px;transform-origin:0 0;transform:scaleX(0.9);">Properties...</span>
<svg class="a" style="left:123px;top:267px;" width="16" height="15" viewBox="0 0 16 15"><path d="M0.5 0.5 H5 L7.5 3 V10.5 H0.5 Z" fill="#fff" stroke="#505050"/><path d="M2 3.5 H4 M2 5.5 H5 M2 7.5 H5" stroke="#5a6b85"/><path d="M6.5 3.5 H11 L14.5 7 V13.5 H6.5 Z" fill="#fff" stroke="#505050"/><path d="M8 6.5 H10 M8 8.5 H13 M8 10.5 H13" stroke="#5a6b85"/></svg>
<svg class="a" style="left:124px;top:288px;" width="16" height="17" viewBox="0 0 16 17"><rect x="0.5" y="2.5" width="10" height="13" fill="#f4f4f4" stroke="#cfcfcf"/><rect x="3" y="0.5" width="5" height="3" fill="#e0e0e0" stroke="#cfcfcf"/><rect x="6.5" y="7.5" width="8" height="9" fill="#f7f7f7" stroke="#cfcfcf"/></svg>
<svg class="a" style="left:127px;top:319px;" width="11" height="10" viewBox="0 0 11 10"><path d="M0.5 0.5 L10.5 9.5 M10.5 0.5 L0.5 9.5" stroke="#555" stroke-width="1.2"/></svg>
<svg class="a" style="left:124px;top:338px;" width="15" height="16" viewBox="0 0 15 16"><rect x="0.5" y="5" width="9" height="6" fill="#3e6db0" stroke="#f4f4f4" stroke-width="1"/><path d="M7.5 1 H12.5 M10 1 V14.5 M7.5 14.5 H12.5" stroke="#333" stroke-width="1"/><path d="M12 4.5 H13.5 V11.5 H12" fill="none" stroke="#777" stroke-width="0.8"/></svg>
<svg class="a" style="left:122px;top:364.5px;" width="19" height="19" viewBox="0 0 19 19"><rect x="0.5" y="0.5" width="18" height="18" fill="#eeeeee" stroke="#b0b0b0"/><path d="M3.2 10.5 L7.2 15 L14.8 4.8" fill="none" stroke="#666" stroke-width="2.4"/></svg>
<svg class="a" style="left:122px;top:386.5px;" width="19" height="19" viewBox="0 0 19 19"><rect x="0.5" y="0.5" width="18" height="18" fill="#eeeeee" stroke="#b0b0b0"/><path d="M3.2 10.5 L7.2 15 L14.8 4.8" fill="none" stroke="#666" stroke-width="2.4"/></svg>
<svg class="a" style="left:123px;top:417px;" width="16" height="15" viewBox="0 0 16 15"><path d="M0.5 0.5 H5 L7.5 3 V10.5 H0.5 Z" fill="#fff" stroke="#505050"/><path d="M2 3.5 H4 M2 5.5 H5 M2 7.5 H5" stroke="#5a6b85"/><path d="M6.5 3.5 H11 L14.5 7 V13.5 H6.5 Z" fill="#fff" stroke="#505050"/><path d="M8 6.5 H10 M8 8.5 H13 M8 10.5 H13" stroke="#5a6b85"/></svg>
<svg class="a" style="left:127px;top:437px;" width="8" height="15" viewBox="0 0 8 15"><path d="M5.5 3 V11.5 A2 2 0 0 1 1.5 11.5 V3 A3 3 0 0 1 7.5 3 V12 A3.5 3.5 0 0 1 0.5 12 V4" fill="none" stroke="#777" stroke-width="1"/></svg>
<svg class="a" style="left:123px;top:589px;" width="16" height="15" viewBox="0 0 16 15"><path d="M3.5 0.5 H13.5 V11.5 H3.5 Z" fill="#fff" stroke="#555"/><path d="M13.5 0.5 Q15.5 0.5 15.5 3 H13.5" fill="#555" stroke="#555"/><path d="M5.5 3.5 H11.5 M5.5 5.5 H11.5 M5.5 7.5 H11.5" stroke="#666"/><rect x="0" y="10" width="9" height="3" rx="1.5" fill="#555"/></svg>
<svg class="a" style="left:123px;top:610px;" width="17" height="17" viewBox="0 0 17 17"><path d="M0.5 0.5 H6 L9.5 4 V13.5 H0.5 Z" fill="#fff" stroke="#555"/><rect x="2" y="4" width="3" height="2" fill="#3e6db0"/><rect x="2" y="8" width="3" height="2" fill="#3e6db0"/><rect x="6.5" y="8.5" width="9" height="7" fill="#fff" stroke="#555"/><rect x="6" y="8" width="10" height="2" fill="#3e6db0"/><path d="M9.5 10 V15.5 M12.5 10 V15.5 M6.5 12.5 H15.5" stroke="#888"/></svg>
<div class="a" style="left:0px;top:0px;width:1024px;height:1px;background:#3c8fd8;"></div>
<div class="a" style="left:0px;top:0px;width:1px;height:662px;background:#5fa3da;"></div>
<div class="a" style="left:1023px;top:0px;width:1px;height:662px;background:#3c8fd8;"></div>
</body></html>
